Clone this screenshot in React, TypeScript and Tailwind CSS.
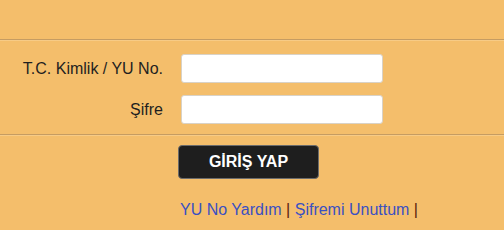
const Rule = () => (
  <div className="h-[2px] w-full border-t border-[#c59c62] border-b border-b-[#f7cb86]" />
);

export default function App() {
  return (
    <div
      className="w-[504px] h-[230px] bg-[#f4be6b] text-[#1e1e1e] overflow-hidden"
      style={{ fontFamily: '"Liberation Sans", Arial, sans-serif' }}
    >
      <div className="h-[39px]" />
      <Rule />

      {/* Form rows */}
      <div className="flex flex-col gap-[12px] pt-[13px] pb-[10px]">
        <div className="flex items-center">
          <label className="w-[163px] text-right text-[16px] leading-[18px] text-[#1f1f1f]">
            T.C. Kimlik / YU No.
          </label>
          <input
            type="text"
            className="ml-[18px] w-[202px] h-[29px] bg-white border border-[#d9d2c6] rounded-[3px] outline-none"
          />
        </div>
        <div className="flex items-center">
          <label className="w-[163px] text-right text-[16px] leading-[18px] text-[#1f1f1f]">
            Şifre
          </label>
          <input
            type="password"
            className="ml-[18px] w-[202px] h-[29px] bg-white border border-[#d9d2c6] rounded-[3px] outline-none"
          />
        </div>
      </div>

      <Rule />

      <div className="pl-[178px] pt-[9px]">
        <button className="w-[141px] h-[34px] bg-[#1e1e1e] border border-[#6b6b6b] rounded-[4px] text-white font-bold text-[16px] leading-none">
          GİRİŞ YAP
        </button>
      </div>

      <div className="pl-[180px] pt-[22px] text-[16px] leading-[18px]">
        <a href="#" className="text-[#3a50c2]">YU No Yardım</a>
        <span className="text-[#5b1d0e]"> | </span>
        <a href="#" className="text-[#3a50c2]">Şifremi Unuttum</a>
        <span className="text-[#5b1d0e]"> |</span>
      </div>
    </div>
  );
}
